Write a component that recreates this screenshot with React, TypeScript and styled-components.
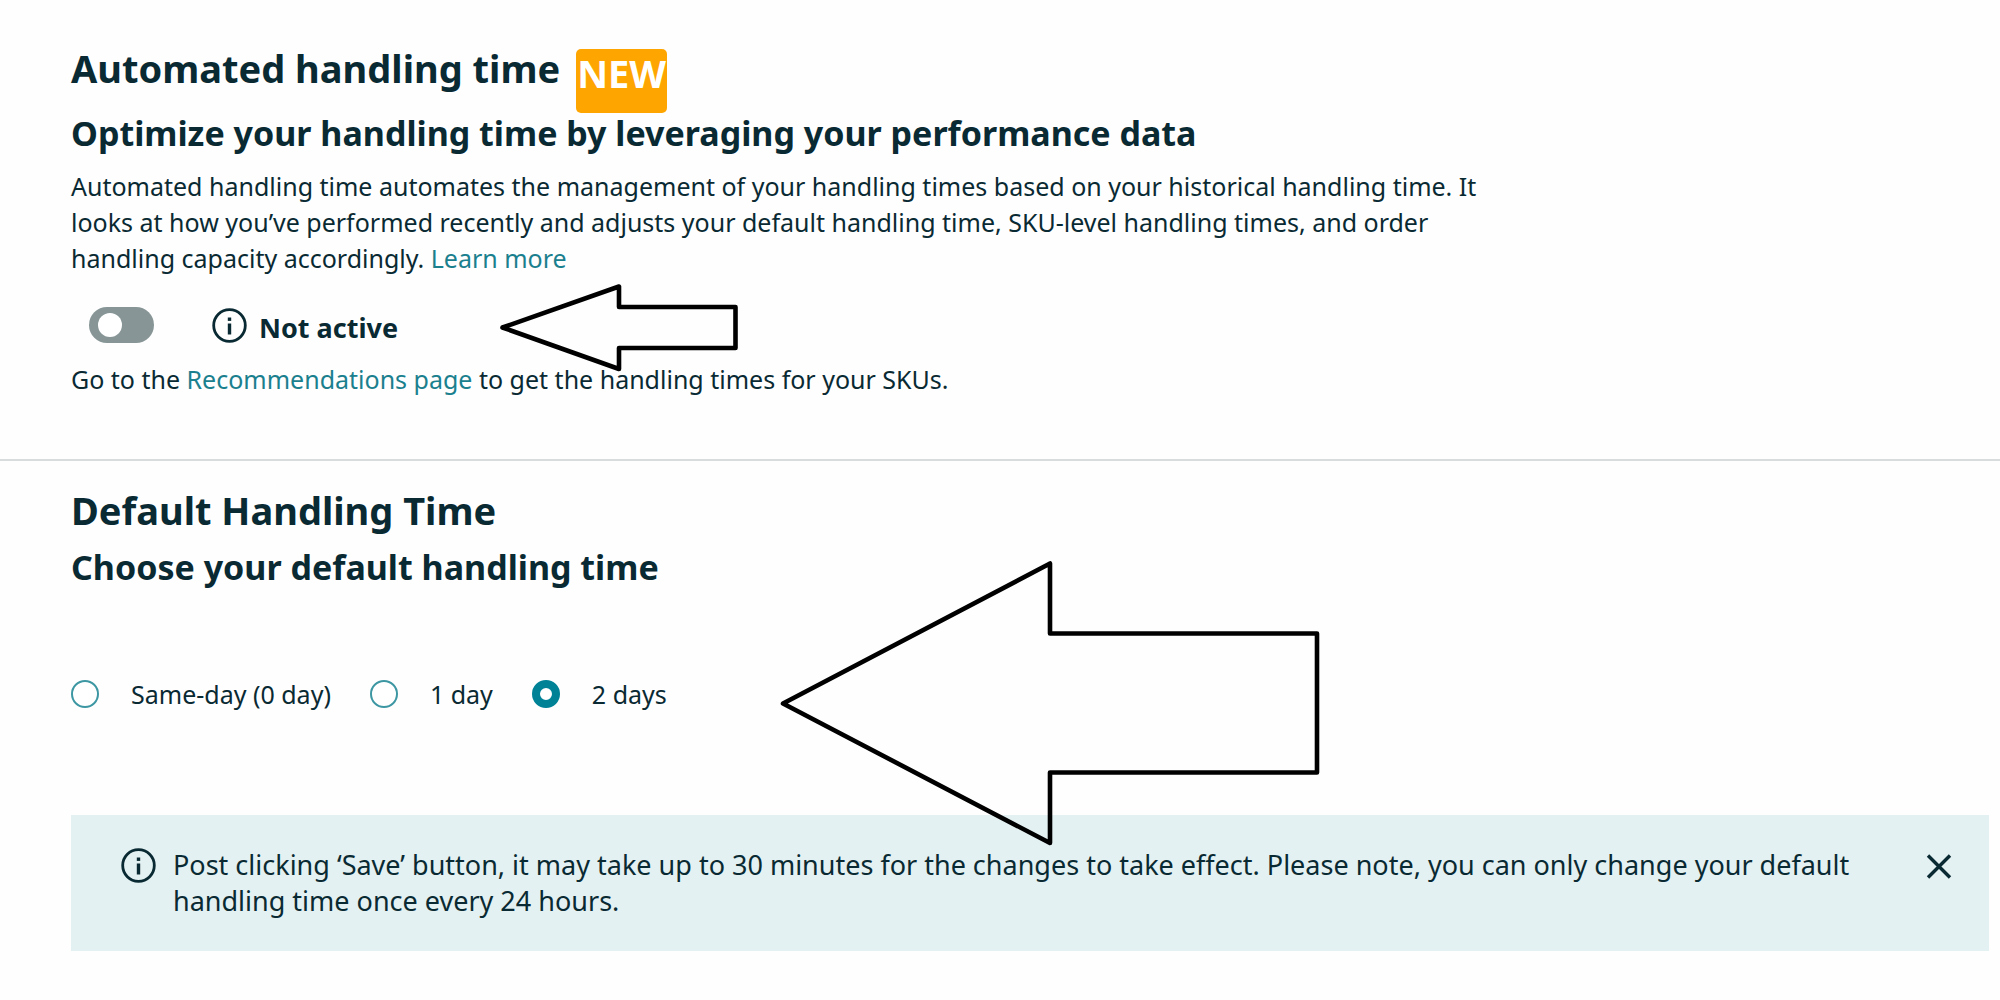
import React, { useState } from "react";
import styled, { createGlobalStyle } from "styled-components";

const ink = "#0a2a33";
const teal = "#008296";

const GlobalStyle = createGlobalStyle`
  * { box-sizing: border-box; }
  body {
    margin: 0;
    background: #fefefe;
    color: ${ink};
    font-family: "Noto Sans", "Open Sans", sans-serif;
    font-size: 25px;
    line-height: 36px;
  }
`;

const Page = styled.main`
  position: relative;
`;

const Section = styled.section<{ $divided?: boolean }>`
  padding: ${(p) => (p.$divided ? "44px 11px 62px 71px" : "25px 11px 48px 71px")};
  border-bottom: ${(p) => (p.$divided ? "2px solid #d9dcdc" : "none")};
`;

const TitleRow = styled.div`
  display: flex;
  align-items: flex-start;
  gap: 16px;
`;

const Title = styled.h1`
  margin: 0;
  font-size: 38px;
  line-height: 48px;
  font-weight: 700;
`;

const Badge = styled.span`
  margin: 5px 0 -2px;
  padding: 0 1px 16px;
  border-radius: 5px;
  background: #ffa500;
  color: #fff;
  font-size: 38px;
  line-height: 48px;
  font-weight: 700;
`;

const Subtitle = styled.h2<{ $gap?: boolean }>`
  margin: ${(p) => (p.$gap ? "11px" : "0")} 0 0;
  font-size: 34px;
  line-height: 44px;
  font-weight: 700;
`;

const Text = styled.p<{ $top?: number }>`
  margin: ${(p) => p.$top ?? 0}px 0 0;
  max-width: 1430px;
`;

const Link = styled.a`
  color: #1b808e;
  text-decoration: none;
`;

const StatusRow = styled.div`
  display: flex;
  align-items: center;
  gap: 58px;
  height: 36px;
  margin: 31px 0 18px 18px;
`;

const Switch = styled.input`
  appearance: none;
  display: flex;
  align-items: center;
  width: 65px;
  height: 36px;
  margin: 0;
  padding: 0 9px;
  border-radius: 18px;
  background: #879596;
  cursor: pointer;

  &::before {
    content: "";
    width: 24px;
    height: 24px;
    border-radius: 50%;
    background: #fff;
  }

  &:checked {
    justify-content: flex-end;
    background: ${teal};
  }
`;

const Status = styled.label`
  display: flex;
  align-items: center;
  gap: 12px;
  font-size: 27px;
  font-weight: 700;
`;

const StatusText = styled.span`
  padding-top: 5px;
`;

const Choices = styled.fieldset`
  display: flex;
  gap: 39px;
  margin: 87px 0 103px;
  padding: 0;
  border: 0;
`;

const Choice = styled.label`
  display: flex;
  align-items: center;
  gap: 32px;
`;

const Radio = styled.input`
  appearance: none;
  width: 28px;
  height: 28px;
  margin: 0;
  border: 2px solid #3d97a3;
  border-radius: 50%;
  background: #fff;

  &:checked {
    border: 8px solid ${teal};
  }
`;

const Notice = styled.div`
  display: flex;
  align-items: flex-start;
  padding: 32px 36px 32px 50px;
  background: #e4f1f2;
  font-size: 27px;
`;

const NoticeText = styled.p`
  flex: 1;
  margin: 0 40px 0 17px;
`;

const Close = styled.button`
  display: flex;
  padding: 5px 0;
  border: 0;
  background: none;
  color: ${ink};
  cursor: pointer;
`;

const Arrow = styled.svg<{ $left: number; $top: number }>`
  position: absolute;
  left: ${(p) => p.$left}px;
  top: ${(p) => p.$top}px;
  fill: none;
  stroke: #000;
  stroke-linejoin: round;
  pointer-events: none;
`;

const InfoIcon = () => (
  <svg width="35" height="36" viewBox="0 0 35 36" fill="none" aria-hidden="true">
    <circle cx="17.5" cy="18.5" r="15.8" stroke={ink} strokeWidth="2.8" />
    <rect x="15.8" y="10.500" width="3.4" height="3.4" fill={ink} />
    <rect x="15.8" y="16.500" width="3.4" height="11" fill={ink} />
  </svg>
);

const options = ["Same-day (0 day)", "1 day", "2 days"];

export default function App() {
  const [active, setActive] = useState(false);
  const [choice, setChoice] = useState("2 days");
  const [noticeOpen, setNoticeOpen] = useState(true);

  return (
    <Page>
      <GlobalStyle />
      <Section $divided>
        <TitleRow>
          <Title>Automated handling time</Title>
          <Badge>NEW</Badge>
        </TitleRow>
        <Subtitle>Optimize your handling time by leveraging your performance data</Subtitle>
        <Text $top={13}>
          Automated handling time automates the management of your handling times based on your
          historical handling time. It looks at how you’ve performed recently and adjusts your
          default handling time, SKU-level handling times, and order handling capacity
          accordingly. <Link href="#learn-more">Learn more</Link>
        </Text>
        <StatusRow>
          <Switch
            id="automated"
            type="checkbox"
            role="switch"
            checked={active}
            onChange={(e) => setActive(e.target.checked)}
          />
          <Status htmlFor="automated">
            <InfoIcon />
            <StatusText>{active ? "Active" : "Not active"}</StatusText>
          </Status>
        </StatusRow>
        <Text>
          Go to the <Link href="#recommendations">Recommendations page</Link> to get the handling
          times for your SKUs.
        </Text>
      </Section>

      <Section>
        <Title>Default Handling Time</Title>
        <Subtitle $gap>Choose your default handling time</Subtitle>
        <Choices aria-label="Default handling time">
          {options.map((option) => (
            <Choice key={option}>
              <Radio
                type="radio"
                name="handling-time"
                checked={choice === option}
                onChange={() => setChoice(option)}
              />
              {option}
            </Choice>
          ))}
        </Choices>
        {noticeOpen && (
          <Notice role="status">
            <InfoIcon />
            <NoticeText>
              Post clicking ‘Save’ button, it may take up to 30 minutes for the changes to take
              effect. Please note, you can only change your default handling time once every 24
              hours.
            </NoticeText>
            <Close type="button" aria-label="Close" onClick={() => setNoticeOpen(false)}>
              <svg width="28" height="28" viewBox="0 0 28 28" aria-hidden="true">
                <path d="M3 3.5 25 25.5M25 3.5 3 25.5" stroke="currentColor" strokeWidth="3.4" />
              </svg>
            </Close>
          </Notice>
        )}
      </Section>

      <Arrow $left={498} $top={282} width="242" height="92" strokeWidth="4.6" aria-hidden="true">
        <path d="M4.500 45.500 121 4.500V25H237.500V66H121V87Z" />
      </Arrow>
      <Arrow $left={778} $top={560} width="544" height="286" strokeWidth="4.6" aria-hidden="true">
        <path d="M5 143.500 272 3.500V73.500H539V212.500H272V283Z" />
      </Arrow>
    </Page>
  );
}
